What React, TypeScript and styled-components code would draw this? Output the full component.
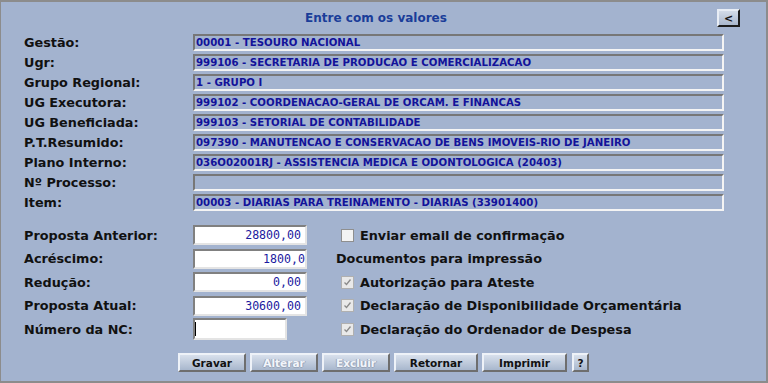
import styled, { createGlobalStyle } from 'styled-components';

const GlobalStyle = createGlobalStyle`
  html, body {
    margin: 0;
    padding: 0;
    background: #a3b3cf;
  }
  * {
    box-sizing: border-box;
  }
`;

const Frame = styled.div`
  width: 768px;
  height: 383px;
  background: #a3b3cf;
  border-top: 2px solid #8c8c8c;
  border-left: 1px solid #8c8c8c;
  border-right: 2px solid #8c8c8c;
  border-bottom: 2px solid #8c8c8c;
  font-family: 'DejaVu Sans', Verdana, sans-serif;
  font-weight: bold;
  color: #111;
  display: flex;
  flex-direction: column;
`;

const Header = styled.div`
  display: flex;
  align-items: center;
  height: 26px;
  padding-top: 6px;
  padding-right: 26px;
`;

const Title = styled.div`
  flex: 1;
  text-align: center;
  font-size: 12px;
  color: #1a3d99;
  padding-left: 34px;
`;

const SmallButton = styled.button`
  width: 23px;
  height: 18px;
  padding: 0;
  font-family: 'DejaVu Sans', Verdana, sans-serif;
  font-weight: bold;
  font-size: 11px;
  color: #111;
  background: linear-gradient(#d3dbe8, #a9b7cd);
  border: 2px outset #e8edf5;
  border-right-color: #707070;
  border-bottom-color: #707070;
`;

const InfoGrid = styled.div`
  display: grid;
  grid-template-columns: 169px 531px;
  grid-auto-rows: 17px;
  row-gap: 3px;
  padding-left: 23px;
  margin-top: 6px;
  align-items: center;
`;

const Label = styled.div`
  font-size: 12.8px;
  white-space: nowrap;
`;

const InfoField = styled.div`
  height: 17px;
  border-top: 2px solid #777;
  border-left: 2px solid #777;
  border-right: 2px solid #f4f4f4;
  border-bottom: 2px solid #f4f4f4;
  font-size: 10.2px;
  color: #12129a;
  padding-left: 1px;
  line-height: 13px;
  white-space: nowrap;
  overflow: hidden;
`;

const Lower = styled.div`
  display: flex;
  margin-top: 14px;
  padding-left: 23px;
`;

const ValuesGrid = styled.div`
  display: grid;
  grid-template-columns: 169px 114px;
  grid-auto-rows: 20px;
  row-gap: 3.5px;
  align-items: center;
`;

const ValueInput = styled.div<{ $narrow?: boolean; $overflow?: boolean }>`
  width: ${(p) => (p.$narrow ? '94px' : '114px')};
  height: ${(p) => (p.$narrow ? '22px' : '20px')};
  background: #fff;
  border-top: 2px solid #808080;
  border-left: 2px solid #808080;
  border-right: 2px solid #e4e4e4;
  border-bottom: 2px solid #e4e4e4;
  font-family: 'DejaVu Sans Mono', 'Liberation Mono', monospace;
  font-weight: normal;
  font-size: 11.6px;
  color: #1a1aa0;
  text-align: right;
  padding-right: ${(p) => (p.$overflow ? '0' : '4px')};
  margin-right: 0;
  line-height: 16px;
  overflow: hidden;
  white-space: nowrap;
`;

const Caret = styled.span`
  display: inline-block;
  width: 1px;
  height: 14px;
  background: #000;
  margin-top: 2px;
  float: left;
`;

const Options = styled.div`
  display: flex;
  flex-direction: column;
  margin-left: 29px;
  row-gap: 3.5px;
`;

const OptionRow = styled.div<{ $indent?: boolean }>`
  display: flex;
  align-items: center;
  height: 20px;
  font-size: 12.8px;
  gap: 6px;
  padding-left: ${(p) => (p.$indent ? '5px' : '0')};
`;

const Box = styled.span<{ $disabled?: boolean }>`
  width: 13px;
  height: 13px;
  border: 1px solid ${(p) => (p.$disabled ? '#b0b0b0' : '#8f8f8f')};
  background: ${(p) => (p.$disabled ? '#e9e9e9' : '#f3f3f3')};
  display: flex;
  align-items: center;
  justify-content: center;
`;

const Footer = styled.div`
  display: flex;
  gap: 4px;
  padding-left: 177px;
  margin-top: 14px;
`;

const ActionButton = styled.button<{ $w: number; $disabled?: boolean }>`
  width: ${(p) => p.$w}px;
  height: 19px;
  padding: 0;
  font-family: 'DejaVu Sans', Verdana, sans-serif;
  font-weight: bold;
  font-size: 10.5px;
  color: ${(p) => (p.$disabled ? '#f2f5fa' : '#111')};
  text-shadow: ${(p) =>
    p.$disabled ? '1px 0 0 #9aa6ba, -1px 0 0 #9aa6ba, 0 1px 0 #9aa6ba' : 'none'};
  background: linear-gradient(#d8e0ec, #a8b7cd);
  border: 2px solid;
  border-color: #eef2f8 #6e6e6e #6e6e6e #eef2f8;
`;

const infoRows: [string, string][] = [
  ['Gestão:', '00001 - TESOURO NACIONAL'],
  ['Ugr:', '999106 - SECRETARIA DE PRODUCAO E COMERCIALIZACAO'],
  ['Grupo Regional:', '1 - GRUPO I'],
  ['UG Executora:', '999102 - COORDENACAO-GERAL DE ORCAM. E FINANCAS'],
  ['UG Beneficiada:', '999103 - SETORIAL DE CONTABILIDADE'],
  ['P.T.Resumido:', '097390 - MANUTENCAO E CONSERVACAO DE BENS IMOVEIS-RIO DE JANEIRO'],
  ['Plano Interno:', '036O02001RJ - ASSISTENCIA MEDICA E ODONTOLOGICA (20403)'],
  ['Nº Processo:', ''],
  ['Item:', '00003 - DIARIAS PARA TREINAMENTO - DIARIAS (33901400)'],
];

const values: [string, string, boolean?][] = [
  ['Proposta Anterior:', '28800,00'],
  ['Acréscimo:', '1800,0', true],
  ['Redução:', '0,00'],
  ['Proposta Atual:', '30600,00'],
];

function Check({ checked }: { checked?: boolean }) {
  return (
    <Box $disabled={checked}>
      {checked && (
        <svg width="9" height="9" viewBox="0 0 9 9">
          <path d="M1.5 4.5 L3.5 6.5 L7.5 1.5" fill="none" stroke="#8a8a8a" strokeWidth="1.3" />
        </svg>
      )}
    </Box>
  );
}

const buttons: { label: string; w: number; disabled?: boolean }[] = [
  { label: 'Gravar', w: 68 },
  { label: 'Alterar', w: 68, disabled: true },
  { label: 'Excluir', w: 68, disabled: true },
  { label: 'Retornar', w: 84 },
  { label: 'Imprimir', w: 85 },
];

export default function App() {
  return (
    <>
      <GlobalStyle />
      <Frame>
        <Header>
          <Title>Entre com os valores</Title>
          <SmallButton>&lt;</SmallButton>
        </Header>
        <InfoGrid>
          {infoRows.map(([label, value]) => (
            <>
              <Label key={label}>{label}</Label>
              <InfoField>{value}</InfoField>
            </>
          ))}
        </InfoGrid>
        <Lower>
          <ValuesGrid>
            {values.map(([label, value, overflow]) => (
              <>
                <Label key={label}>{label}</Label>
                <ValueInput $overflow={overflow}>{value}</ValueInput>
              </>
            ))}
            <Label>Número da NC:</Label>
            <ValueInput $narrow>
              <Caret />
            </ValueInput>
          </ValuesGrid>
          <Options>
            <OptionRow $indent>
              <Check />
              Enviar email de confirmação
            </OptionRow>
            <OptionRow>Documentos para impressão</OptionRow>
            <OptionRow $indent>
              <Check checked />
              Autorização para Ateste
            </OptionRow>
            <OptionRow $indent>
              <Check checked />
              Declaração de Disponibilidade Orçamentária
            </OptionRow>
            <OptionRow $indent>
              <Check checked />
              Declaração do Ordenador de Despesa
            </OptionRow>
          </Options>
        </Lower>
        <Footer>
          {buttons.map((b) => (
            <ActionButton key={b.label} $w={b.w} $disabled={b.disabled}>
              {b.label}
            </ActionButton>
          ))}
          <ActionButton $w={17} style={{ marginLeft: 1 }}>?</ActionButton>
        </Footer>
      </Frame>
    </>
  );
}
